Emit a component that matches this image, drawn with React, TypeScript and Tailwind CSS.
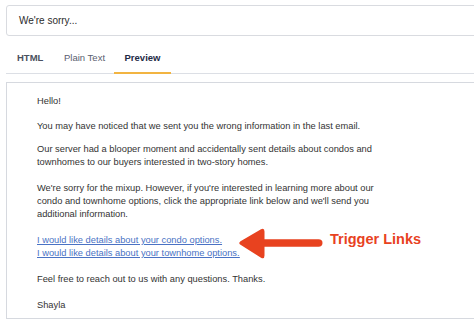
export default function App() {
  return (
    <div className="w-[474px] h-[324px] overflow-hidden bg-white font-['Liberation_Sans',Arial,sans-serif] text-[#333]">
      <div className="pl-[6px]">
        <div className="mt-[5px] h-[31px] w-[480px] rounded-[3px] border border-[#d9dbe0] flex items-center pl-[12px] text-[10px] text-[#2b2b2b]">
          We're sorry...
        </div>

        <div className="mt-[10px] w-[480px] border-b border-[#dcdfe5] flex text-[9.5px] h-[28px]">
          <div className="pl-[11px] w-[58px] pt-[5px] text-[#4a5160] font-semibold">HTML</div>
          <div className="w-[50px] pt-[5px] text-[#5a6070]">Plain Text</div>
          <div className="w-[57px] pt-[5px] border-b-2 border-[#f2b441] text-center font-bold text-[#1e2a45] -mb-px">
            Preview
          </div>
        </div>

        <div className="relative mt-[8px] w-[480px] h-[237px] border border-[#d6d9df] pl-[30px] pt-[12px] text-[9.3px] leading-[13px]">
          <p>Hello!</p>
          <p className="mt-[12px]">You may have noticed that we sent you the wrong information in the last email.</p>
          <p className="mt-[10px]">
            Our server had a blooper moment and accidentally sent details about condos and
            <br />
            townhomes to our buyers interested in two-story homes.
          </p>
          <p className="mt-[13px]">
            We're sorry for the mixup. However, if you're interested in learning more about our
            <br />
            condo and townhome options, click the appropriate link below and we'll send you
            <br />
            additional information.
          </p>
          <p className="mt-[13px] text-[#4a72c4] underline">
            <a>I would like details about your condo options.</a>
            <br />
            <a>I would like details about your townhome options.</a>
          </p>
          <p className="mt-[13px]">Feel free to reach out to us with any questions. Thanks.</p>
          <p className="mt-[13px]">Shayla</p>

          {/* annotation arrow */}
          <svg
            className="absolute left-[226px] top-[143px]"
            width="92"
            height="36"
            viewBox="0 0 92 36"
          >
            <path
              d="M7.5 15.2 L28 3.2 Q31.5 1.5 31.5 5.5 L31.5 13.3 L85.5 13.3 Q89.5 13.3 89.5 17 Q89.5 20.7 85.5 20.7 L31.5 20.7 L31.5 29.5 Q31.5 33.5 28 31.8 L7.5 18.8 Q5 17 7.5 15.2 Z"
              fill="#e8421f"
            />
          </svg>
          <div className="absolute left-[323px] top-[149px] text-[14.5px] font-bold text-[#e8421f] leading-none">
            Trigger Links
          </div>
        </div>
      </div>
    </div>
  );
}
